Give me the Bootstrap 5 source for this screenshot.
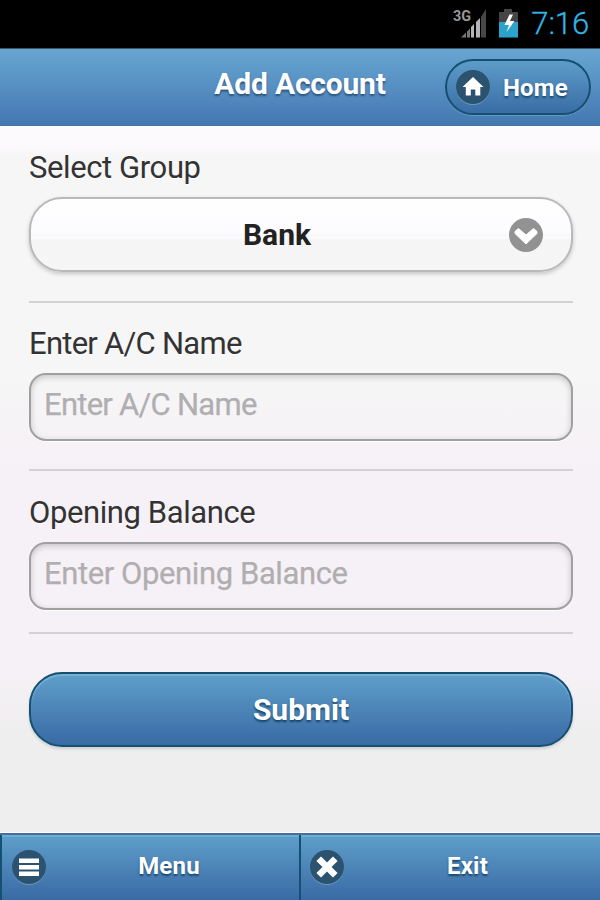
<!DOCTYPE html>
<html lang="en">
<head>
<meta charset="utf-8">
<meta name="viewport" content="width=device-width, initial-scale=1">
<title>Add Account</title>
<link href="https://cdn.jsdelivr.net/npm/bootstrap@5.3.0/dist/css/bootstrap.min.css" rel="stylesheet">
<style>
body{font-family:Roboto,"Liberation Sans",sans-serif;color:#333;width:600px;height:900px;overflow:hidden;
  background:linear-gradient(#fcfafd 126px,#fbf9fc 148px,#f6f6f6 156px,#f6f6f6 375px,#f6f1f6 460px,#f6f1f6 665px,#eee 745px,#eee 100%)}
.status-bar{height:48px;background:#000;padding-right:11px}
.clock{font-size:31px;line-height:48px;color:#33b5e5;font-weight:300;letter-spacing:-.1px;-webkit-text-stroke:.3px #33b5e5}
.title-bar{height:78px;padding:10px 9px 0 0;background:linear-gradient(#68a6d2,#4478b1);border-top:1px solid #33566f;border-bottom:1px solid #4474a5}
.title-bar h1{font-size:30px;line-height:50px;color:#fff;letter-spacing:-.2px;text-shadow:0 2px 2px #2c547d}
.side{width:147px}
.btn-home{width:146px;height:56px;padding:0 21px 0 9px;border:2px solid #145072;border-radius:28px;background:linear-gradient(#5d9cc9,#396da5);
  color:#fff;font-size:24px;letter-spacing:.2px;text-shadow:0 2px 2px #1c4a73;box-shadow:0 1px 1px #6999c2}
.btn-home span{padding-top:1px}
.form-area{padding:20px 27px 0 29px}
.field-label{font-size:31px;line-height:44px;height:44px;text-shadow:0 1px 0 #fff;white-space:nowrap}
.tight{letter-spacing:-.4px}
.tighter,.tighter::placeholder{letter-spacing:-.74px}
.select-box{margin-top:7px;height:75px;border:2px solid #b9b9b9;border-radius:33px;padding:0 28px;
  background:linear-gradient(#fff,#fcfbfe 48%,#f6f5f7 51%,#fcfbfd 54%,#f5f5f5 58%,#f6f6f6);box-shadow:0 2px 4px #0003;
  font-size:30px;color:#222}
.select-box span{padding:0 14px 0 0}
.rule{height:2px;background:#d3d1d4;margin:28px 0 20px}
.rule-first{margin-top:29px;margin-bottom:19px}
.rule-last{margin:22px 0 0}
.form-area .text-box{margin-top:7px;height:68px;border:2px solid #a09fa2;border-radius:17px;padding:0 13px 6px;background:transparent;
  box-shadow:inset 0 2px 6px #0003,0 1px 1px #fff;font-size:31px;color:#333}
.text-box::placeholder{color:#b0aeb0;opacity:1;-webkit-text-stroke:.25px #b0aeb0}
.btn-submit{height:75px;margin-top:38px;border:2px solid #145072;border-radius:33px;background:linear-gradient(#5f9fcb,#396aa4);
  color:#fff;font-size:30px;text-shadow:0 2px 2px #19466d;box-shadow:inset 0 2px 1px #7bb0d4,0 2px 3px #0002}
.foot{height:67px;border-top:2px solid #456f9c;box-shadow:0 -1px 0 #fff}
.foot-btn{border-left:2px solid #145072;background:linear-gradient(#5f9fcb,#396aa4);box-shadow:inset 0 2px 0 #70add3;
  color:#fff;font-size:24px;letter-spacing:.2px;text-shadow:0 2px 2px #19466d;text-decoration:none;padding:0 0 1px 9px;width:301px}
.foot-btn:first-child{width:299px;padding-left:10px}
.foot-btn span{padding:0 9px 3px 0}
.foot-btn:first-child span{padding-right:7px}
</style>
</head>
<body class="d-flex flex-column">
<div class="status-bar d-flex justify-content-end align-items-center">
  <svg width="76" height="48" viewBox="-2 0 76 48">
    <text x="0" y="21" font-size="15.500" font-weight="700" fill="#999" textLength="18" lengthAdjust="spacingAndGlyphs">3G</text>
    <path d="M8 37.500L13 32.500V37.500ZM14 31.500l3-3v9h-3z" fill="#777"/>
    <path d="M18 27l3-3v13.500h-3zM23 22l4-4v19.500h-4z" fill="#b5b5b5"/>
    <path d="M28 17l5-8v28.500h-5z" fill="#484848"/>
    <path d="M51 9h8v3h6v10H46V12h5z" fill="#454545"/><path d="M46 22h19v15.500H46z" fill="#2da3cc"/>
    <path d="M56.500 14.500L51.500 25h4.500L53.500 32l8-11h-4.500l3-6.500z" fill="#fff"/>
  </svg>
  <span class="clock ms-1">7:16</span>
</div>
<header class="title-bar d-flex">
  <div class="side ms-2"></div>
  <h1 class="flex-fill text-center fw-bold mb-0">Add Account</h1>
  <button class="btn-home d-flex align-items-center justify-content-between fw-bold">
    <svg width="34" height="36" viewBox="0 0 34 36"><circle cx="17" cy="19" r="17" fill="#6898be"/><circle cx="17" cy="18" r="17" fill="#2b536f"/><path d="M17 8L6.500 18h3.300v8.500h5v-6h4.500v6h5V18h3.200z" fill="#fff"/></svg>
    <span>Home</span>
  </button>
</header>
<main class="form-area flex-fill">
  <div class="field-label tight">Select Group</div>
  <div class="select-box d-flex align-items-center fw-bold">
    <span class="flex-fill text-center">Bank</span>
    <svg width="34" height="34" viewBox="0 0 34 34"><circle cx="17" cy="17" r="17" fill="#929292"/><path d="M6 13.500L9.500 10.500l7.500 6.500 7.500-6.500L28 13.500v2L17 26 6 15.500z" fill="#fff" stroke="#fff" stroke-linejoin="round"/></svg>
  </div>
  <div class="rule rule-first"></div>
  <label class="field-label tighter d-block" for="acname">Enter A/C Name</label>
  <input id="acname" class="form-control text-box tighter" placeholder="Enter A/C Name">
  <div class="rule"></div>
  <label class="field-label tight d-block" for="bal">Opening Balance</label>
  <input id="bal" class="form-control text-box tight" placeholder="Enter Opening Balance">
  <div class="rule rule-last"></div>
  <button class="btn-submit w-100 fw-bold">Submit</button>
</main>
<footer class="foot d-flex">
  <a class="foot-btn d-flex align-items-center fw-bold" href="#">
    <svg width="34" height="36" viewBox="0 0 34 36"><circle cx="17" cy="19" r="17" fill="#6898be"/><circle cx="17" cy="18" r="17" fill="#2b536f"/><path d="M7 9.500h20v4.500H7zM7 16h20v4.500H7zM7 22.500h20V27H7z" fill="#fff"/></svg>
    <span class="flex-fill text-center">Menu</span>
  </a>
  <a class="foot-btn d-flex align-items-center fw-bold" href="#">
    <svg width="34" height="36" viewBox="0 0 34 36"><circle cx="17" cy="19" r="17" fill="#6898be"/><circle cx="17" cy="18" r="17" fill="#2b536f"/><path d="M11 12l12 12M23 12l-12 12" stroke="#fff" stroke-width="6.500" stroke-linecap="square"/></svg>
    <span class="flex-fill text-center">Exit</span>
  </a>
</footer>
<script src="https://cdn.jsdelivr.net/npm/bootstrap@5.3.0/dist/js/bootstrap.bundle.min.js"></script>
</body>
</html>
